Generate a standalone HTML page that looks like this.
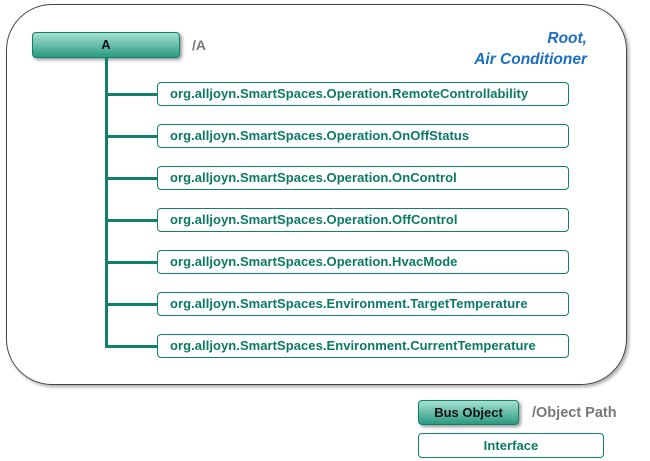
<!DOCTYPE html><html><head><style>
body{margin:0;width:650px;height:461px;background:#fff;font-family:"Liberation Sans",sans-serif;position:relative;overflow:hidden}
.outer{position:absolute;left:6px;top:4px;width:619px;height:379px;border:1.5px solid #444;border-radius:46px;box-shadow:2px 2px 3px #aaa}
.bo{position:absolute;background:linear-gradient(#a6e0d2,#2a9a82);border:1px solid #10806a;border-radius:4px;box-shadow:2px 2px 3px #999;font-weight:bold;font-size:13px;color:#111;text-align:center;box-sizing:border-box}
.if{position:absolute;left:157px;width:412px;height:24px;border:1.3px solid #10806a;border-radius:4px;box-sizing:border-box;color:#0a7a64;font-weight:bold;font-size:13px;line-height:22px;padding-left:12px;letter-spacing:0.05px}
.ln{position:absolute;background:#10806a}
.g{position:absolute;color:#777;font-weight:bold;font-size:14px}
</style></head><body>
<div class="outer"></div>
<div class="bo" style="left:32px;top:32px;width:148px;height:26px;line-height:24px">A</div>
<div class="g" style="left:192px;top:37px">/A</div>
<div style="position:absolute;right:63px;top:28px;text-align:right;color:#1a6fc0;font-style:italic;font-weight:bold;font-size:15.5px;line-height:21px">Root,<br>Air Conditioner</div>
<div class="ln" style="left:105px;top:57px;width:3px;height:291px"></div>
<div class="ln" style="left:105px;top:93px;width:52px;height:3px"></div>
<div class="ln" style="left:105px;top:135px;width:52px;height:3px"></div>
<div class="ln" style="left:105px;top:177px;width:52px;height:3px"></div>
<div class="ln" style="left:105px;top:219px;width:52px;height:3px"></div>
<div class="ln" style="left:105px;top:261px;width:52px;height:3px"></div>
<div class="ln" style="left:105px;top:303px;width:52px;height:3px"></div>
<div class="ln" style="left:105px;top:345px;width:52px;height:3px"></div>
<div class="if" style="top:82px">org.alljoyn.SmartSpaces.Operation.RemoteControllability</div>
<div class="if" style="top:124px">org.alljoyn.SmartSpaces.Operation.OnOffStatus</div>
<div class="if" style="top:166px">org.alljoyn.SmartSpaces.Operation.OnControl</div>
<div class="if" style="top:208px">org.alljoyn.SmartSpaces.Operation.OffControl</div>
<div class="if" style="top:250px">org.alljoyn.SmartSpaces.Operation.HvacMode</div>
<div class="if" style="top:292px">org.alljoyn.SmartSpaces.Environment.TargetTemperature</div>
<div class="if" style="top:334px">org.alljoyn.SmartSpaces.Environment.CurrentTemperature</div>
<div class="bo" style="left:418px;top:400px;width:101px;height:25px;line-height:23px">Bus Object</div>
<div class="g" style="left:532px;top:405px;font-size:14.5px">/Object Path</div>
<div class="if" style="left:418px;top:433px;width:186px;height:25px;padding:0;text-align:center;line-height:23px">Interface</div>
</body></html>
